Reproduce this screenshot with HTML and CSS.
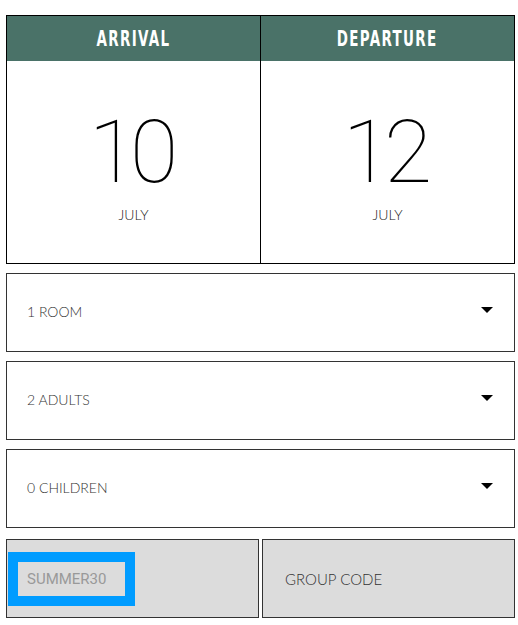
FILE: index.html
```html
<!DOCTYPE html>
<html>

<head>
    <title>Booking</title>
    <link rel="stylesheet" href="styles.css">
</head>

<body>
    <div class="dates">
        <div class="date-col">
            <div class="date-head"><span>Arrival</span></div>
            <div class="date-body">
                <div class="day">10</div>
                <div class="month">JULY</div>
            </div>
        </div>
        <div class="date-col">
            <div class="date-head"><span>Departure</span></div>
            <div class="date-body">
                <div class="day">12</div>
                <div class="month">JULY</div>
            </div>
        </div>
    </div>

    <div class="select-box">
        <span>1 ROOM</span>
        <span class="caret"></span>
    </div>
    <div class="select-box">
        <span>2 ADULTS</span>
        <span class="caret"></span>
    </div>
    <div class="select-box">
        <span>0 CHILDREN</span>
        <span class="caret"></span>
    </div>

    <div class="codes">
        <div class="code-box">
            <div class="promo-input">SUMMER30</div>
        </div>
        <div class="code-box group">GROUP CODE</div>
    </div>
</body>

</html>
```

FILE: styles.css
```css
body {
    margin: 0;
    padding: 15px 3px 0 6px;
    background-color: #fff;
    font-family: Lato, 'Open Sans', sans-serif;
}

.dates {
    display: grid;
    grid-template-columns: 253px 1fr;
    border: 1px solid #000;
    height: 247px;
    margin-bottom: 1px;
}

.date-col {
    display: flex;
    flex-direction: column;
}

.date-col + .date-col {
    border-left: 1px solid #000;
}

.date-head {
    height: 45px;
    background-color: #4a7268;
    color: #fff;
    display: flex;
    align-items: center;
    justify-content: center;
    text-transform: uppercase;
    font-family: 'DejaVu Sans', sans-serif;
    font-stretch: condensed;
    font-weight: bold;
    font-size: 22px;
    letter-spacing: 2px;
}

.date-head span {
    display: inline-block;
    transform: scaleX(0.68);
}

.date-body {
    flex: 1;
    display: flex;
    flex-direction: column;
    align-items: center;
    padding-top: 47px;
}

.day {
    font-family: Roboto, sans-serif;
    font-weight: 100;
    font-size: 88px;
    line-height: 88px;
    letter-spacing: -7px;
    margin-left: -7px;
    color: #000;
}

.month {
    margin-top: 10px;
    font-size: 14px;
    font-weight: 300;
    color: #222;
}

.select-box {
    margin-top: 9px;
    height: 77px;
    border: 1px solid #333;
    display: flex;
    align-items: center;
    justify-content: space-between;
    padding: 0 21px 3px 20px;
    box-sizing: border-box;
    height: 79px;
    font-size: 14px;
    font-weight: 300;
    color: #333;
}

.caret {
    width: 0;
    height: 0;
    border-left: 6px solid transparent;
    border-right: 6px solid transparent;
    border-top: 6px solid #000;
    margin-top: -2px;
}

.codes {
    margin-top: 11px;
    display: grid;
    grid-template-columns: 253px 1fr;
    gap: 3px;
}

.code-box {
    height: 77px;
    border: 1px solid #333;
    background-color: #dcdcdc;
    display: flex;
    align-items: center;
}

.promo-input {
    margin-left: 1px;
    width: 98px;
    height: 34px;
    border: 10px solid #009cff;
    padding-left: 9px;
    display: flex;
    align-items: center;
    font-family: Roboto, sans-serif;
    font-size: 15px;
    color: #999;
}

.group {
    padding-left: 22px;
    font-size: 15px;
    font-weight: 300;
    color: #333;
}
```
